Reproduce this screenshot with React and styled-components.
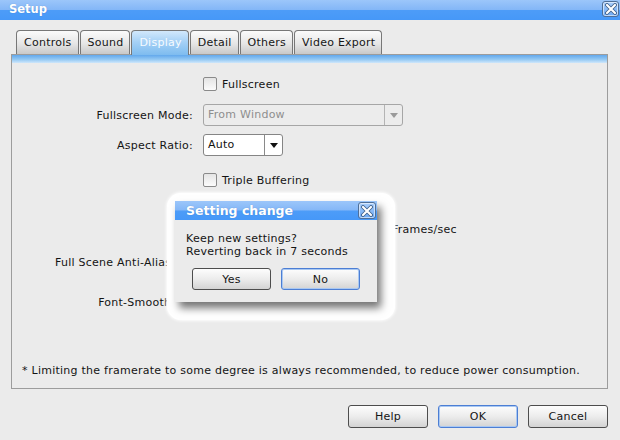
import React from 'react'
import styled, { createGlobalStyle } from 'styled-components'

const GlobalStyle = createGlobalStyle`
    html, body{
        margin:0;
        padding:0;
    }
    body{
        background:#ebebeb;
        font-family:'DejaVu Sans', 'Liberation Sans', sans-serif;
        font-size:11px;
        letter-spacing:0.25px;
        color:#141414;
    }
`

const Window = styled.div`
    position:relative;
    width:620px;
    height:440px;
    background:#ebebeb;
    display:flex;
    flex-direction:column;
    overflow:hidden;
`
const TitleBar = styled.div`
    flex:none;
    box-sizing:border-box;
    height:${p => p.$h}px;
    display:flex;
    align-items:center;
    justify-content:space-between;
    padding:0 1px ${p => p.$pb || 0}px ${p => p.$pl}px;
    background:linear-gradient(to bottom, #9cc6fa 0%, #84b7f7 48%, #4d9cf8 52%, #4698f8 100%);
    color:#fff;
    font-weight:bold;
    font-size:${p => p.$fs}px;
    letter-spacing:0;
    text-shadow:0 0 1px rgba(20,60,120,0.35);
`
const CloseBox = styled.div`
    width:${p => p.$s}px;
    height:${p => p.$s - 1}px;
    box-sizing:border-box;
    border:1px solid #4f6f98;
    border-radius:3px;
    background:linear-gradient(to bottom, #a9cdfa, #6da9f3);
    box-shadow:inset 0 0 0 1px rgba(255,255,255,0.55);
    display:flex;
    align-items:center;
    justify-content:center;
    svg{ display:block; }
`
const Body = styled.div`
    flex:1;
    display:flex;
    flex-direction:column;
    padding:10px 12px 12px 11px;
    min-height:0;
`
const TabRow = styled.div`
    display:flex;
    gap:1px;
    margin-left:5px;
    height:24px;
    flex:none;
`
const Tab = styled.div`
    box-sizing:border-box;
    height:${p => p.$active ? 25 : 24}px;
    margin-bottom:${p => p.$active ? -1 : 0}px;
    position:relative;
    z-index:${p => p.$active ? 1 : 0};
    padding:0 6px 0 7px;
    line-height:23px;
    border:1px solid #777;
    border-bottom:none;
    border-radius:4px 4px 0 0;
    color:${p => p.$active ? '#f6fbff' : '#161616'};
    background:${p => p.$active
        ? 'linear-gradient(to bottom, #d2e8fb 0%, #a6d1f6 45%, #7ebcef 100%)'
        : 'linear-gradient(to bottom, #fbfbfb 0%, #e6e6e6 55%, #c9c9c9 100%)'};
`
const Panel = styled.div`
    flex:1;
    display:flex;
    flex-direction:column;
    border:1px solid #9c9c9c;
    min-height:0;
`
const Stripe = styled.div`
    height:8px;
    flex:none;
    background:linear-gradient(to bottom, #62a8ec 0%, #93c8f3 55%, #cfe7fb 100%);
`
const Row = styled.div`
    display:flex;
    align-items:center;
    height:${p => p.$h || 22}px;
    margin-top:${p => p.$mt}px;
    flex:none;
`
const Label = styled.div`
    width:181px;
    margin-right:10px;
    text-align:right;
    white-space:nowrap;
`
const Check = styled.span`
    display:inline-block;
    box-sizing:border-box;
    width:14px;
    height:14px;
    border:1px solid #8a8a8a;
    border-radius:2px;
    background:linear-gradient(to bottom, #e4e4e4, #fbfbfb);
    margin-right:5px;
    flex:none;
`
const Combo = styled.div`
    box-sizing:border-box;
    width:${p => p.$w}px;
    height:22px;
    display:flex;
    border:1px solid ${p => p.$disabled ? '#a6a6a6' : '#858585'};
    border-radius:3px;
    background:${p => p.$disabled ? '#ececec' : '#fff'};
    color:${p => p.$disabled ? '#8e8e8e' : '#111'};
    flex:none;
`
const ComboText = styled.div`
    flex:1;
    padding-left:4px;
    line-height:20px;
    white-space:nowrap;
    overflow:hidden;
`
const ComboArrow = styled.div`
    width:17px;
    margin-left:auto;
    border-left:1px solid ${p => p.$disabled ? '#b4b4b4' : '#8a8a8a'};
    display:flex;
    align-items:center;
    justify-content:center;
    &::after{
        content:'';
        border-left:4px solid transparent;
        border-right:4px solid transparent;
        border-top:5px solid ${p => p.$disabled ? '#9a9a9a' : '#111'};
    }
`
const Spin = styled.div`
    flex:1;
    height:20px;
    border:1px solid #858585;
    border-radius:3px;
    background:#fff;
    margin:0 6px 0 0;
`
const LimitGroup = styled.div`
    width:189px;
    display:flex;
    align-items:center;
`
const Footnote = styled.div`
    margin-top:auto;
    padding:0 0 11px 10px;
    line-height:13px;
`
const ButtonRow = styled.div`
    display:flex;
    justify-content:${p => p.$justify || 'flex-end'};
    gap:10px;
    margin-top:${p => p.$mt}px;
    padding-left:${p => p.$pl || 0}px;
    flex:none;
`
const Button = styled.div`
    box-sizing:border-box;
    width:${p => p.$w}px;
    height:${p => p.$h}px;
    display:flex;
    align-items:center;
    justify-content:center;
    border:1px solid ${p => p.$default ? '#4c7ed4' : '#4d4d4d'};
    border-radius:3px;
    background:linear-gradient(to bottom, #fdfdfd 0%, #ececec 50%, #d3d3d3 100%);
    box-shadow:${p => p.$default ? 'inset 0 0 0 1px #a9c8f2' : 'none'};
    color:#151515;
`
const Glow = styled.div`
    position:absolute;
    left:167px;
    top:193px;
    padding:8px 18px 18px 8px;
    background:#fff;
    border-radius:14px;
    box-shadow:0 0 3px 1px rgba(255,255,255,0.9);
    z-index:5;
`
const Dialog = styled.div`
    width:202px;
    height:101px;
    background:#ebebeb;
    display:flex;
    flex-direction:column;
    box-shadow:4px 6px 8px rgba(0,0,0,0.55);
`
const DialogText = styled.div`
    padding:13px 0 0 11px;
    line-height:12.5px;
`

const CloseIcon = ({ size }) => (
    <CloseBox $s={size}>
        <svg width="12" height="12" viewBox="0 0 12 12">
            <path d="M2 2L10 10M10 2L2 10" stroke="#3d5d86" strokeWidth="3.8" strokeLinecap="round" />
            <path d="M2 2L10 10M10 2L2 10" stroke="#fff" strokeWidth="2.2" strokeLinecap="round" />
        </svg>
    </CloseBox>
)

const tabs = ['Controls', 'Sound', 'Display', 'Detail', 'Others', 'Video Export']

class App extends React.Component{
    render(){
        return (
            <Window>
                <GlobalStyle />
                <TitleBar $h={20} $pl={9} $fs={11.5} $pb={3}>
                    <span>Setup</span>
                    <CloseIcon size={17} />
                </TitleBar>
                <Body>
                    <TabRow>
                        {tabs.map(t => <Tab key={t} $active={t === 'Display'}>{t}</Tab>)}
                    </TabRow>
                    <Panel>
                        <Stripe />
                        <Row $mt={14} $h={14}>
                            <Label />
                            <Check />Fullscreen
                        </Row>
                        <Row $mt={13}>
                            <Label>Fullscreen Mode:</Label>
                            <Combo $w={200} $disabled>
                                <ComboText>From Window</ComboText>
                                <ComboArrow $disabled />
                            </Combo>
                        </Row>
                        <Row $mt={8}>
                            <Label>Aspect Ratio:</Label>
                            <Combo $w={80}>
                                <ComboText>Auto</ComboText>
                                <ComboArrow />
                            </Combo>
                        </Row>
                        <Row $mt={17} $h={14}>
                            <Label />
                            <Check />Triple Buffering
                        </Row>
                        <Row $mt={31}>
                            <Label />
                            <LimitGroup>
                                <Check />
                                <Spin />
                            </LimitGroup>
                            Frames/sec
                        </Row>
                        <Row $mt={11}>
                            <Label>Full Scene Anti-Aliasing:</Label>
                            <Combo $w={80}>
                                <ComboArrow />
                            </Combo>
                        </Row>
                        <Row $mt={18}>
                            <Label>Font-Smoothing:</Label>
                            <Combo $w={80}>
                                <ComboArrow />
                            </Combo>
                        </Row>
                        <Footnote>* Limiting the framerate to some degree is always recommended, to reduce power consumption.</Footnote>
                    </Panel>
                    <ButtonRow $mt={16}>
                        <Button $w={80} $h={23}>Help</Button>
                        <Button $w={80} $h={23} $default>OK</Button>
                        <Button $w={80} $h={23}>Cancel</Button>
                    </ButtonRow>
                </Body>
                <Glow>
                    <Dialog>
                        <TitleBar $h={19} $pl={11} $fs={12.5}>
                            <span>Setting change</span>
                            <CloseIcon size={18} />
                        </TitleBar>
                        <DialogText>
                            Keep new settings?<br />
                            Reverting back in 7 seconds
                        </DialogText>
                        <ButtonRow $mt={10} $justify="flex-start" $pl={17}>
                            <Button $w={79} $h={22}>Yes</Button>
                            <Button $w={79} $h={22} $default>No</Button>
                        </ButtonRow>
                    </Dialog>
                </Glow>
            </Window>
        )
    }
}

export default App
